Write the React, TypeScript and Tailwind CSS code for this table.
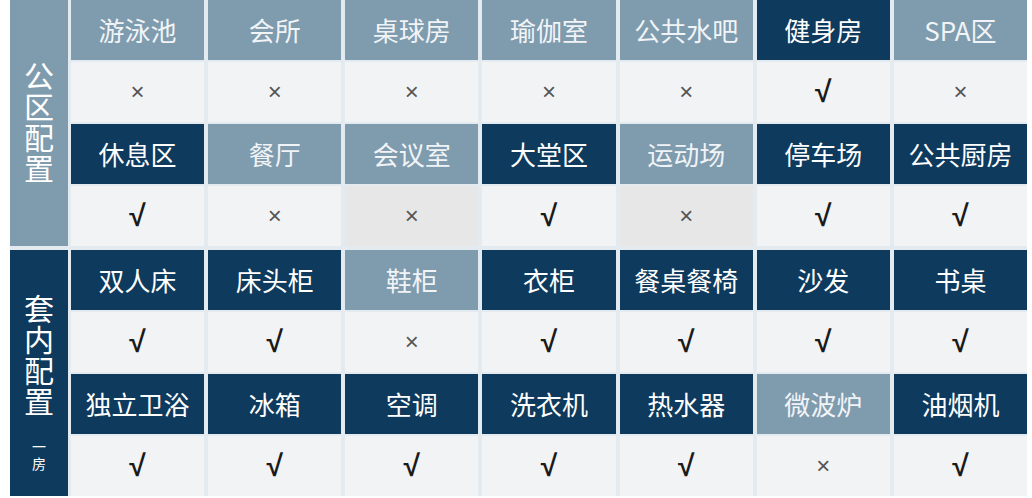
import React from "react";

type Cell = { name: string; dark: boolean; has: boolean; shade?: boolean };

const publicRows: Cell[][] = [
  [
    { name: "游泳池", dark: false, has: false },
    { name: "会所", dark: false, has: false },
    { name: "桌球房", dark: false, has: false },
    { name: "瑜伽室", dark: false, has: false },
    { name: "公共水吧", dark: false, has: false },
    { name: "健身房", dark: true, has: true },
    { name: "SPA区", dark: false, has: false },
  ],
  [
    { name: "休息区", dark: true, has: true },
    { name: "餐厅", dark: false, has: false },
    { name: "会议室", dark: false, has: false, shade: true },
    { name: "大堂区", dark: true, has: true },
    { name: "运动场", dark: false, has: false, shade: true },
    { name: "停车场", dark: true, has: true },
    { name: "公共厨房", dark: true, has: true },
  ],
];

const unitRows: Cell[][] = [
  [
    { name: "双人床", dark: true, has: true },
    { name: "床头柜", dark: true, has: true },
    { name: "鞋柜", dark: false, has: false },
    { name: "衣柜", dark: true, has: true },
    { name: "餐桌餐椅", dark: true, has: true },
    { name: "沙发", dark: true, has: true },
    { name: "书桌", dark: true, has: true },
  ],
  [
    { name: "独立卫浴", dark: true, has: true },
    { name: "冰箱", dark: true, has: true },
    { name: "空调", dark: true, has: true },
    { name: "洗衣机", dark: true, has: true },
    { name: "热水器", dark: true, has: true },
    { name: "微波炉", dark: false, has: false },
    { name: "油烟机", dark: true, has: true },
  ],
];

function Grid({ rows }: { rows: Cell[][] }) {
  return (
    <div className="grid flex-1 grid-cols-7 gap-x-[4px] gap-y-[2px]">
      {rows.map((row, ri) => (
        <React.Fragment key={ri}>
          {row.map((c) => (
            <div
              key={c.name}
              className={`flex h-[60px] items-center justify-center text-[26px] leading-none ${
                c.dark ? "bg-[#0d3a5d] text-white" : "bg-[#7f9bae] text-[#f1f4f7]"
              }`}
            >
              {c.name}
            </div>
          ))}
          {row.map((c) => (
            <div
              key={c.name + "-v"}
              className={`flex h-[60px] items-center justify-center ${
                c.shade ? "bg-[#e7e7e8]" : "bg-[#f2f3f5]"
              }`}
            >
              {c.has ? (
                <span className="font-['Liberation_Sans',sans-serif] text-[30px] font-bold leading-none text-[#1a1a1a]">
                  √
                </span>
              ) : (
                <span className="font-['Liberation_Sans',sans-serif] text-[24px] leading-none text-[#555]">
                  ×
                </span>
              )}
            </div>
          ))}
        </React.Fragment>
      ))}
    </div>
  );
}

export default function App() {
  return (
    <div className="h-[498px] w-[1032px] bg-white font-['Noto_Sans_CJK_SC',sans-serif]">
      <div className="ml-[10px] flex w-[1017px] flex-col gap-[4px] bg-[#e3ebf1]">
        <div className="flex gap-[3px]">
          <div className="flex w-[58px] items-center justify-center bg-[#7f9bae] text-white">
            <span className="text-[30px] leading-none tracking-[1px] [writing-mode:vertical-rl]">
              公区配置
            </span>
          </div>
          <Grid rows={publicRows} />
        </div>
        <div className="flex gap-[3px]">
          <div className="flex w-[58px] flex-col items-center bg-[#0d3a5d] pt-[44px] text-white">
            <span className="text-[30px] leading-none tracking-[1px] [writing-mode:vertical-rl]">
              套内配置
            </span>
            <span className="mt-[22px] text-[14px] leading-none tracking-[3px] [writing-mode:vertical-rl]">
              一房
            </span>
          </div>
          <Grid rows={unitRows} />
        </div>
      </div>
    </div>
  );
}
